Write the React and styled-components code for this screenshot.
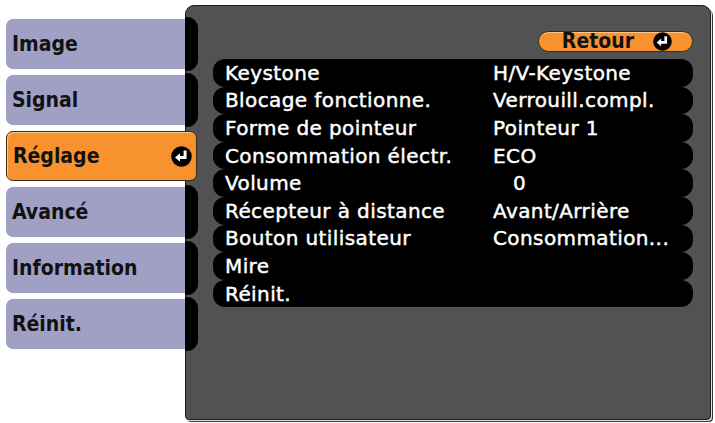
import React from 'react';
import styled, { createGlobalStyle } from 'styled-components';

const GlobalStyle = createGlobalStyle`
    html, body {
        margin: 0;
        padding: 0;
        background: #ffffff;
    }
    body {
        font-family: "DejaVu Sans", "Liberation Sans", sans-serif;
    }
`;

const tabs = ['Image', 'Signal', 'Réglage', 'Avancé', 'Information', 'Réinit.'];

const rows = [
    { label: 'Keystone', value: 'H/V-Keystone' },
    { label: 'Blocage fonctionne.', value: 'Verrouill.compl.' },
    { label: 'Forme de pointeur', value: 'Pointeur 1' },
    { label: 'Consommation électr.', value: 'ECO' },
    { label: 'Volume', value: '0', indent: true },
    { label: 'Récepteur à distance', value: 'Avant/Arrière' },
    { label: 'Bouton utilisateur', value: 'Consommation...' },
    { label: 'Mire', value: '' },
    { label: 'Réinit.', value: '' },
];

function EnterIcon({ size = 17 }) {
    return (
        <svg width={size} height={size} viewBox="0 0 20 20">
            <circle cx="10" cy="10" r="9.8" fill="#000" />
            <path d="M13.4 4.4 V11 H7.8" fill="none" stroke="#fff" strokeWidth="2.8" strokeLinejoin="miter" />
            <polygon points="3.8,11 8.6,6.9 8.6,15.1" fill="#fff" />
        </svg>
    );
}

function App() {
    return (
        <>
            <GlobalStyle />
            <Screen>
                <TabColumn>
                    {tabs.map((t) => (
                        <Tab key={t} active={t === 'Réglage'}>
                            {t}
                            {t === 'Réglage' && (
                                <TabIcon>
                                    <EnterIcon size={21} />
                                </TabIcon>
                            )}
                        </Tab>
                    ))}
                </TabColumn>

                <Panel>
                    <BackButton>
                        Retour
                        <EnterIcon size={19} />
                    </BackButton>
                    <List>
                        {rows.map((r) => (
                            <Row key={r.label}>
                                <Label>{r.label}</Label>
                                <Value indent={r.indent}>{r.value}</Value>
                            </Row>
                        ))}
                    </List>
                </Panel>
            </Screen>
        </>
    );
}

export default App;

export const Screen = styled.div`
    display: flex;
    align-items: flex-start;
    width: 715px;
    height: 423px;
    padding: 5px 0 0 6px;
    box-sizing: border-box;
`;

export const TabColumn = styled.div`
    position: relative;
    z-index: 2;
    display: flex;
    flex-direction: column;
    gap: 6px;
    width: 179px;
    padding-top: 14px;
`;

export const Tab = styled.div`
    position: relative;
    display: flex;
    align-items: center;
    justify-content: space-between;
    box-sizing: border-box;
    height: 50px;
    width: ${(props) => (props.active ? '191px' : '179px')};
    padding: 0 4px 0 6px;
    border-radius: ${(props) => (props.active ? '7px' : '7px 0 0 7px')};
    background: ${(props) => (props.active ? '#f7922f' : '#a09fc4')};
    border: ${(props) => (props.active ? '1px solid #3b2a14' : 'none')};
    box-shadow: ${(props) => (props.active ? 'inset 1px 1px 0 #fbc98f' : 'none')};
    font-family: "DejaVu Sans Condensed", "DejaVu Sans", sans-serif;
    font-size: 21px;
    font-weight: bold;
    color: #111111;

    &::after {
        content: '';
        display: ${(props) => (props.active ? 'none' : 'block')};
        position: absolute;
        top: -2px;
        right: -13px;
        width: 13px;
        height: 54px;
        background: #000000;
        border-radius: 0 11px 11px 0;
    }
`;

export const TabIcon = styled.span`
    display: flex;
`;

export const Panel = styled.div`
    display: flex;
    flex-direction: column;
    align-items: flex-end;
    box-sizing: border-box;
    width: 526px;
    height: 415px;
    padding: 25px 17px 0 27px;
    background: #525254;
    border: 1px solid #1b1b1b;
    border-radius: 9px 9px 4px 4px;
    box-shadow: 1px 1px 0 #e2e2e2, 2px 2px 0 #3a3a3a;
`;

export const BackButton = styled.div`
    display: flex;
    align-items: center;
    justify-content: flex-end;
    gap: 19px;
    box-sizing: border-box;
    width: 155px;
    height: 21px;
    padding-right: 20px;
    background: #f7922f;
    border: 1px solid #3b2a14;
    border-radius: 11px;
    box-shadow: inset 0 1px 0 #fbc98f;
    font-family: "DejaVu Sans Condensed", "DejaVu Sans", sans-serif;
    font-size: 21px;
    font-weight: bold;
    line-height: 19px;
    color: #111111;
`;

export const List = styled.div`
    display: flex;
    flex-direction: column;
    width: 100%;
    margin-top: 7px;
`;

export const Row = styled.div`
    display: grid;
    grid-template-columns: 268px 1fr;
    align-items: center;
    height: 27.6px;
    padding-left: 12px;
    background: #000000;
    border-radius: 12px;
    font-size: 20px;
    letter-spacing: 0.4px;
    color: #ffffff;
    -webkit-text-stroke: 0.45px #ffffff;
    white-space: nowrap;
`;

export const Label = styled.span``;

export const Value = styled.span`
    padding-left: ${(props) => (props.indent ? '20px' : '0')};
`;
